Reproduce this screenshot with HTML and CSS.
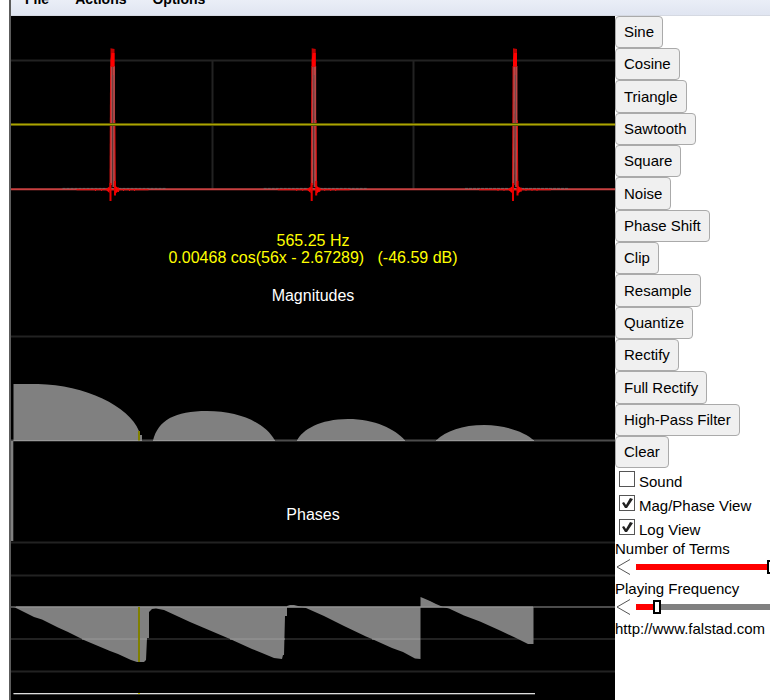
FILE: index.html
```
<!DOCTYPE html>
<html lang="en">
<head>
<meta charset="utf-8">
<title>Fourier Series</title>
<link rel="stylesheet" href="styles.css">
</head>
<body>
<div class="app">
  <nav class="menubar">
    <button type="button">File</button>
    <button type="button">Actions</button>
    <button type="button">Options</button>
  </nav>
  <main class="workspace">
    <svg class="plot" viewBox="11 16 604 684" role="img" aria-label="Waveform, magnitudes and phases">
      <defs>
        <!-- one pulse of the wave with its ringing, centred on x = 0 -->
        <g id="pulse">
          <path d="M-36 189.700H36" stroke="#e11818" stroke-width="1.300"/>
          <path d="M-50 188.400H54" stroke="#777" stroke-width=".7" stroke-dasharray="3 1"/>
          <path d="M-1.700 66L-2.300 190" stroke="#d81010" stroke-width="1.400"/>
          <path d="M-.7 66L-1.300 185" stroke="#b84848" stroke-width="1.700"/>
          <path d="M1.300 66V187" stroke="#bd4444" stroke-width="2.300"/>
          <path d="M.4 75V187" stroke="#555" stroke-width=".7"/>
          <path d="M2.300 120L2.800 190" stroke="#e01010"/>
          <path d="M-2 48.300L2 49V66.500H-2Z" fill="#c00000"/>
          <path d="M-1 53H2V66.500H-2V60Z" fill="#f00"/>
          <path d="M-2 183V201M2.500 181V195.500" stroke="#e50000" stroke-width="2"/>
          <path d="M-7 189.500L-3 186.500V193ZM8 189.500L3 186V193.500Z" fill="#f00"/>
          <path d="M-5 188V191M6 187.500V192M-11 189V191M11 189V191M-17 189V191M17 189V191M22 189V191" stroke="#d11"/>
        </g>
      </defs>
      <rect x="11" y="16" width="604" height="684" fill="#000"/>
      <g class="grid">
        <path d="M11 60.500H615M11 336.500H615M11 542.500H615M11 575.500H615M11 639H615M11 671.500H615M212.500 60V189M413.500 60V189"/>
      </g>
      <path class="axis" d="M11 440.500H615M11 607H615"/>
      <path d="M11 189.300H615" stroke="#c84040" stroke-width="2"/>
      <use href="#pulse" x="112.500"/>
      <use href="#pulse" x="313.700"/>
      <use href="#pulse" x="515"/>
      <path d="M11 124.500H615" stroke="#5c5800" stroke-width="3"/>
      <path d="M11 124.500H615" stroke="#aaa400"/>

      <g class="readout">
        <text x="313" y="245.500">565.25 Hz</text>
        <text x="313" y="263" xml:space="preserve">0.00468 cos(56x - 2.67289)   (-46.59 dB)</text>
      </g>
      <text class="heading" x="313" y="301">Magnitudes</text>
      <text class="heading" x="313" y="519.500">Phases</text>

      <g class="bars">
        <path d="M13.500 440.500V384H38C85 385 129 406 139 431H140V435H142V440.500Z"/>
        <path d="M153 440.500C158 420 175 411 207 411C240 411 265 423 275 440.500Z"/>
        <path d="M297 440.500C302 430 320 419 348 419C375 419 395 429 405 440.500Z"/>
        <path d="M436 440.500C446 431 462 425 484.500 425C505 425 525 432 534 440.500Z"/>
        <path d="M14 607L34 617L42 619.500L58 627.500L68 632L85 640.500L110 651L118 654L131 660L137 662H144L146 660L147 638H149V612L152 609L156 608.500L164 610L190 622L210 630.500L230 639L252 649L262 653L274 658L282 659L283 655H284L285 616H287V606L290 605H294L302 607L306 608L324 616L344 626L366 636.500L372 639L392 648L403 652L415 658.500L420.500 659V597L423 598L430 601L436 604L443 607L449 608.500L464 615.500L480 621.500L500 630.500L516 638L528 644H533.500V607Z"/>
        <path d="M11 441H13.300V541H11Z"/>
      </g>
      <path d="M13.500 440.500H142M153 440.500H275M297 440.500H405M436 440.500H534M16 607H533M82 639H147M230 639H285M372 639H420" stroke="#999"/>
      <path d="M139 431V440.500M139 607V662" stroke="#808000" stroke-width="2"/>
      <path d="M13.500 694H535" stroke="#444" stroke-width="2"/>
      <path d="M13.500 693.500H535" stroke="#ddd"/>
      <path d="M138 693.500H140" stroke="#cc0"/>
    </svg>

    <aside class="controls">
      <div class="actions">
        <button type="button">Sine</button>
        <button type="button">Cosine</button>
        <button type="button">Triangle</button>
        <button type="button">Sawtooth</button>
        <button type="button">Square</button>
        <button type="button">Noise</button>
        <button type="button">Phase Shift</button>
        <button type="button">Clip</button>
        <button type="button">Resample</button>
        <button type="button">Quantize</button>
        <button type="button">Rectify</button>
        <button type="button">Full Rectify</button>
        <button type="button">High-Pass Filter</button>
        <button type="button">Clear</button>
      </div>
      <div class="checks">
        <label><input type="checkbox">Sound</label>
        <label><input type="checkbox" checked>Mag/Phase View</label>
        <label><input type="checkbox" checked>Log View</label>
      </div>
      <div class="field">
        <label for="terms">Number of Terms</label>
        <div class="scroll">
          <button type="button" aria-label="Fewer terms"><svg viewBox="0 0 16 16"><path d="M15 0.500L2 8L15 15.500"/></svg></button>
          <input id="terms" type="range" min="0" max="232" value="131" style="--fill: 57%">
        </div>
      </div>
      <div class="field">
        <label for="freq">Playing Frequency</label>
        <div class="scroll">
          <button type="button" aria-label="Lower frequency"><svg viewBox="0 0 16 16"><path d="M15 0.500L2 8L15 15.500"/></svg></button>
          <input id="freq" type="range" min="0" max="232" value="17" style="--fill: 8%">
        </div>
      </div>
      <a class="site" href="http://www.falstad.com">http://www.falstad.com</a>
    </aside>
  </main>
</div>
</body>
</html>
```
FILE: styles.css
```
* { box-sizing: border-box; }

body {
  margin: 0;
  background: #fff;
  color: #000;
  font: 15px/20px "Liberation Sans", Arial, sans-serif;
  overflow: hidden;
}

button { font: inherit; color: inherit; }

.app {
  margin-left: 9px;
  border-left: 2px solid #5c5c5c;
}

.menubar {
  display: flex;
  align-items: flex-end;
  gap: 26px;
  height: 16px;
  padding: 0 14px 7px;
  overflow: hidden;
  background: linear-gradient(#eaeef7, #e0e5f1);
  border-bottom: 1px solid #d5d9e2;
}

.menubar button {
  flex: none;
  padding: 0;
  border: 0;
  background: none;
  font-size: 14px;
  font-weight: bold;
  line-height: 18px;
}

.workspace {
  display: flex;
  align-items: flex-start;
}

.plot {
  display: block;
  flex: 1;
  min-width: 0;
}

.plot text {
  font-size: 16px;
  text-anchor: middle;
}

.grid { fill: none; stroke: #222; stroke-width: 2; }
.axis { fill: none; stroke: #4c4c4c; stroke-width: 2; }
.bars { fill: #808080; }
.readout { fill: #ff0; }
.heading { fill: #fff; }

.controls {
  flex: 0 0 155px;
  overflow: hidden;
}

.actions {
  display: flex;
  flex-direction: column;
  align-items: flex-start;
}

.actions button {
  height: 32px;
  padding: 0 8px;
  border: 1px solid #aaa;
  border-radius: 4px;
  background: #f0f0f0;
  white-space: nowrap;
}

.actions button:nth-child(3n) { height: 33px; }

.checks {
  display: grid;
  grid-auto-rows: 24px;
  padding-top: 2px;
  margin-bottom: -3px;
}

.checks label {
  display: flex;
  align-items: flex-start;
  gap: 4px;
  padding: 1px 4px 0;
  line-height: 22px;
  white-space: nowrap;
}

.checks input {
  appearance: none;
  flex: none;
  width: 16px;
  height: 16px;
  margin: 0;
  border: 1px solid #555;
  background: #fff;
}

.checks input:checked::before {
  content: "";
  display: block;
  width: 14px;
  height: 14px;
  background: #222;
  clip-path: polygon(2px 7px, 4px 6px, 6px 9px, 10px 2px, 13px 3px, 7px 12px, 5px 12px);
}

.field label {
  display: block;
  height: 20px;
  white-space: nowrap;
}

.scroll {
  display: flex;
  align-items: center;
  gap: 5px;
  height: 20px;
  padding-bottom: 5px;
}

.scroll button {
  flex: none;
  width: 16px;
  height: 16px;
  padding: 0;
  border: 0;
  background: none;
}

.scroll svg {
  display: block;
  fill: none;
  stroke: #555;
}

.scroll input {
  appearance: none;
  flex: none;
  width: 240px;
  height: 14px;
  margin: 0;
  background: none;
}

.scroll input::-webkit-slider-runnable-track {
  height: 6px;
  background: linear-gradient(to right, #f00 var(--fill), #808080 var(--fill));
}

.scroll input::-webkit-slider-thumb {
  appearance: none;
  width: 8px;
  height: 14px;
  margin-top: -4px;
  border: 2px solid #000;
  background: #fff;
}

.site {
  color: inherit;
  text-decoration: none;
  white-space: nowrap;
}
```
